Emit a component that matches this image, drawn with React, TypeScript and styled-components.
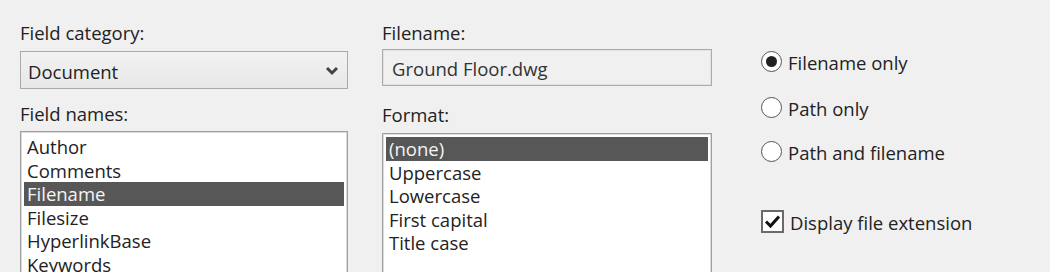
import React from "react";
import styled, { createGlobalStyle } from "styled-components";

const GlobalStyle = createGlobalStyle`
	html, body {
		margin: 0;
		padding: 0;
		background: #f0f0f0;
	}
	body {
		font-family: "Open Sans", "Noto Sans", "Liberation Sans", sans-serif;
		color: #222;
	}
`;

// --- layout ---
const Page = styled.div`
	display: flex;
	height: 272px;
	overflow: hidden;
	padding: 21px 0 0 20px;
	box-sizing: border-box;
	background: #f0f0f0;
`;

const Column = styled.div<{ width: number; gap: number }>`
	display: flex;
	flex-direction: column;
	width: ${({ width }) => width}px;
	margin-right: ${({ gap }) => gap}px;
	flex-shrink: 0;

	& > * {
		flex-shrink: 0;
	}
`;

const Label = styled.div<{ top?: number }>`
	font-size: 18.5px;
	line-height: 24px;
	color: #222;
	margin-top: ${({ top }) => top || 0}px;
	white-space: nowrap;
`;

// --- dropdown ---
const Select = styled.div`
	margin-top: 6px;
	height: 38px;
	box-sizing: border-box;
	border: 1px solid #a9a9a9;
	background: linear-gradient(#f2f2f2, #e8e8e8);
	display: flex;
	align-items: center;
	justify-content: space-between;
	padding: 2px 8px 0 7px;
	font-size: 18.5px;
	color: #222;
`;

const Chevron = () => (
	<svg width="14" height="10" viewBox="0 0 14 10">
		<polyline points="2,2 7,7 12,2" fill="none" stroke="#444" strokeWidth="3" />
	</svg>
);

// --- textbox ---
const TextBox = styled.div`
	margin-top: 4px;
	height: 37px;
	box-sizing: border-box;
	border: 1px solid #acacac;
	box-shadow: inset 0 0 0 1px #e2e2e2;
	background: #f0f0f0;
	display: flex;
	align-items: center;
	padding: 1px 0 0 9px;
	font-size: 18.5px;
	color: #333;
`;

// --- listbox ---
const ListBox = styled.div<{ top: number }>`
	margin-top: ${({ top }) => top}px;
	height: 200px;
	box-sizing: border-box;
	border: 1px solid #a0a0a0;
	box-shadow: inset 0 0 0 1px #dcdcdc;
	background: #fff;
	padding: 3px;
`;

const ListItem = styled.div<{ selected?: boolean }>`
	height: 23.5px;
	line-height: 23.5px;
	font-size: 18.5px;
	padding-left: 3px;
	white-space: nowrap;
	background: ${({ selected }) => (selected ? "#575757" : "transparent")};
	color: ${({ selected }) => (selected ? "#f4f4f4" : "#222")};
`;

// --- radio / checkbox ---
const OptionRow = styled.div<{ top: number }>`
	display: flex;
	align-items: center;
	gap: 6px;
	height: 23px;
	margin-top: ${({ top }) => top}px;
	font-size: 18.5px;
	color: #222;
	white-space: nowrap;
`;

const Radio = styled.span<{ checked?: boolean }>`
	width: 21px;
	height: 21px;
	box-sizing: border-box;
	border-radius: 50%;
	border: 1.5px solid #555;
	background: #fff;
	display: flex;
	align-items: center;
	justify-content: center;
	flex-shrink: 0;

	&::after {
		content: "";
		width: 11px;
		height: 11px;
		border-radius: 50%;
		background: ${({ checked }) => (checked ? "#222" : "transparent")};
	}
`;

const CheckBox = styled.span`
	width: 23px;
	height: 23px;
	box-sizing: border-box;
	border: 2px solid #6a6a6a;
	background: #fff;
	display: flex;
	align-items: center;
	justify-content: center;
	flex-shrink: 0;
`;

const CheckMark = () => (
	<svg width="17" height="15" viewBox="0 0 17 15">
		<polyline points="2,7.5 6.5,12 15,2.5" fill="none" stroke="#111" strokeWidth="3" />
	</svg>
);

const OptionText = styled.span`
	line-height: 23px;
	padding-top: 1px;
`;

const fieldNames = ["Author", "Comments", "Filename", "Filesize", "HyperlinkBase", "Keywords", "LastSavedBy"];
const formats = ["(none)", "Uppercase", "Lowercase", "First capital", "Title case"];

const radios = [
	{ label: "Filename only", checked: true, top: 29 },
	{ label: "Path only", checked: false, top: 23 },
	{ label: "Path and filename", checked: false, top: 21 },
];

export default function App() {
	return (
		<>
			<GlobalStyle />
			<Page>
				<Column width={328} gap={34}>
					<Label>Field category:</Label>
					<Select>
						<span>Document</span>
						<Chevron />
					</Select>
					<Label top={13}>Field names:</Label>
					<ListBox top={5}>
						{fieldNames.map((n) => (
							<ListItem key={n} selected={n === "Filename"}>
								{n}
							</ListItem>
						))}
					</ListBox>
				</Column>

				<Column width={330} gap={49}>
					<Label>Filename:</Label>
					<TextBox>Ground Floor.dwg</TextBox>
					<Label top={17}>Format:</Label>
					<ListBox top={6}>
						{formats.map((f) => (
							<ListItem key={f} selected={f === "(none)"}>
								{f}
							</ListItem>
						))}
					</ListBox>
				</Column>

				<Column width={260} gap={0}>
					{radios.map((r) => (
						<OptionRow key={r.label} top={r.top}>
							<Radio checked={r.checked} />
							<OptionText>{r.label}</OptionText>
						</OptionRow>
					))}
					<OptionRow top={47}>
						<CheckBox>
							<CheckMark />
						</CheckBox>
						<OptionText>Display file extension</OptionText>
					</OptionRow>
				</Column>
			</Page>
		</>
	);
}
